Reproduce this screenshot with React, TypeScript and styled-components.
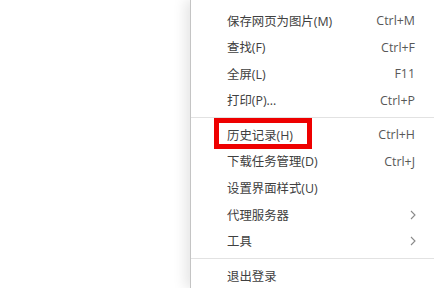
import React from "react";
import styled, { createGlobalStyle } from "styled-components";

const GlobalStyle = createGlobalStyle`
  html, body {
    margin: 0;
    padding: 0;
    background: #ffffff;
    overflow: hidden;
  }
`;

type Entry =
  | { kind: "item"; label: string; shortcut?: string; submenu?: boolean; marked?: boolean }
  | { kind: "sep" };

const entries: Entry[] = [
  { kind: "item", label: "保存网页为图片(M)", shortcut: "Ctrl+M" },
  { kind: "item", label: "查找(F)", shortcut: "Ctrl+F" },
  { kind: "item", label: "全屏(L)", shortcut: "F11" },
  { kind: "item", label: "打印(P)...", shortcut: "Ctrl+P" },
  { kind: "sep" },
  { kind: "item", label: "历史记录(H)", shortcut: "Ctrl+H", marked: true },
  { kind: "item", label: "下载任务管理(D)", shortcut: "Ctrl+J" },
  { kind: "item", label: "设置界面样式(U)" },
  { kind: "item", label: "代理服务器", submenu: true },
  { kind: "item", label: "工具", submenu: true },
  { kind: "sep" },
  { kind: "item", label: "退出登录" },
];

function Chevron() {
  return (
    <svg width="6" height="10" viewBox="0 0 6 10">
      <polyline points="1,1 5,5 1,9" fill="none" stroke="#8a8a8a" strokeWidth="1.1" />
    </svg>
  );
}

export default function App() {
  return (
    <>
      <GlobalStyle />
      <Page>
        <Menu>
          {entries.map((e, i) =>
            e.kind === "sep" ? (
              <Separator key={i} />
            ) : (
              <Item key={i}>
                <Label>{e.label}</Label>
                {e.shortcut && <Shortcut>{e.shortcut}</Shortcut>}
                {e.submenu && <Arrow><Chevron /></Arrow>}
                {e.marked && <Highlight />}
              </Item>
            )
          )}
        </Menu>
      </Page>
    </>
  );
}

const Page = styled.div`
  width: 434px;
  height: 288px;
  display: flex;
  font-family: "Open Sans", "Noto Sans CJK SC", sans-serif;
`;

const Menu = styled.ul`
  list-style: none;
  margin: 0 0 0 190px;
  padding: 7.4px 0 0;
  flex: 1;
  background: #ffffff;
  border-left: 1px solid #c4c4c4;
  box-shadow: -5px 0 12px rgba(0, 0, 0, 0.1);
`;

const Item = styled.li`
  position: relative;
  height: 26.6px;
  display: flex;
  align-items: center;
  justify-content: space-between;
  padding: 0 19px 0 36px;
  font-size: 12.4px;
  color: #404040;
`;

const Label = styled.span`
  white-space: nowrap;
`;

const Shortcut = styled.span`
  color: #585858;
  white-space: nowrap;
`;

const Arrow = styled.span`
  display: flex;
  align-items: center;
  margin-right: -1px;
`;

const Separator = styled.li`
  height: 1px;
  margin: 3.4px 0 3.4px;
  background: #e2e2e2;
`;

const Highlight = styled.span`
  position: absolute;
  left: 23px;
  top: -3.7px;
  width: 98px;
  height: 31px;
  box-sizing: border-box;
  border: 5px solid #ee0000;
  pointer-events: none;
`;
